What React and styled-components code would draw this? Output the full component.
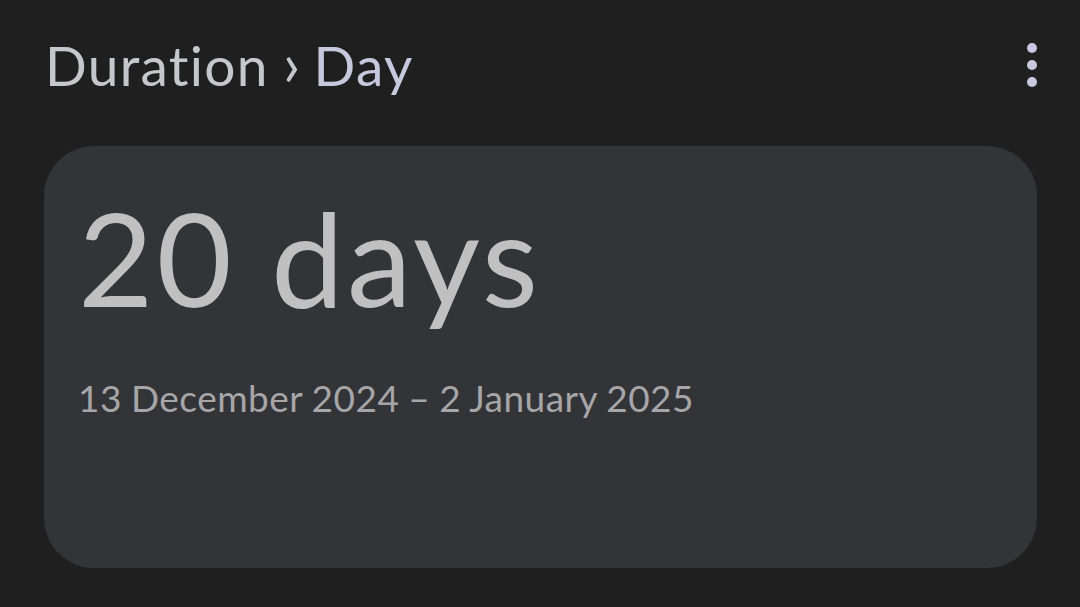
import React from 'react';
import styled, { createGlobalStyle } from 'styled-components';

const Global = createGlobalStyle`
	html, body {
		margin: 0;
		padding: 0;
		background: #1f1f1f;
	}
	body {
		font-family: Lato, Roboto, sans-serif;
		font-variant-ligatures: none;
	}
`;

const Page = styled.div`
	width: 1080px;
	height: 607px;
	box-sizing: border-box;
	padding: 19px 43px 0 44px;
	display: flex;
	flex-direction: column;
	background: #1f1f1f;
`;

const Header = styled.div`
	display: flex;
	align-items: center;
	justify-content: space-between;
	height: 86px;
`;

const Title = styled.h1`
	margin: 0;
	font-size: 55px;
	font-weight: 400;
	letter-spacing: 1.3px;
	color: #c4c7cc;
	padding-left: 1px;
	display: flex;
	align-items: baseline;
`;

const Crumb = styled.span`
	color: ${p => (p.current ? '#c6c9dd' : '#c4c7cc')};
`;

const Sep = styled.span`
	font-size: 62px;
	margin: 0 12px 0 14px;
	color: #c4c7cc;
`;

const MenuButton = styled.button`
	border: none;
	background: none;
	padding: 0;
	width: 24px;
	height: 48px;
	margin-right: -7px;
	margin-top: 6px;
	display: flex;
	align-items: center;
	justify-content: center;
`;

const Card = styled.section`
	margin-top: 41px;
	height: 422px;
	border-radius: 50px;
	background: #333438;
	padding: 36px 34px 0;
	box-sizing: border-box;
`;

const Amount = styled.div`
	font-size: 130px;
	font-weight: 400;
	line-height: 150px;
	color: #c0c0c0;
	letter-spacing: 3px;
`;

const Range = styled.div`
	margin-top: 43px;
	font-size: 37px;
	color: #a6a6a8;
	letter-spacing: 0.5px;
	word-spacing: -1px;
`;

const Dots = () => (
	<svg width="24" height="48" viewBox="0 0 24 48">
		<circle cx="12" cy="7" r="5" fill="#c6c9dd" />
		<circle cx="12" cy="24" r="5" fill="#c6c9dd" />
		<circle cx="12" cy="41" r="5" fill="#c6c9dd" />
	</svg>
);

export default function App() {
	return (
		<Page>
			<Global />
			<Header>
				<Title>
					<Crumb>Duration</Crumb>
					<Sep>›</Sep>
					<Crumb current>Day</Crumb>
				</Title>
				<MenuButton aria-label="More options">
					<Dots />
				</MenuButton>
			</Header>
			<Card>
				<Amount>20 days</Amount>
				<Range>13 December 2024 – 2 January 2025</Range>
			</Card>
		</Page>
	);
}
